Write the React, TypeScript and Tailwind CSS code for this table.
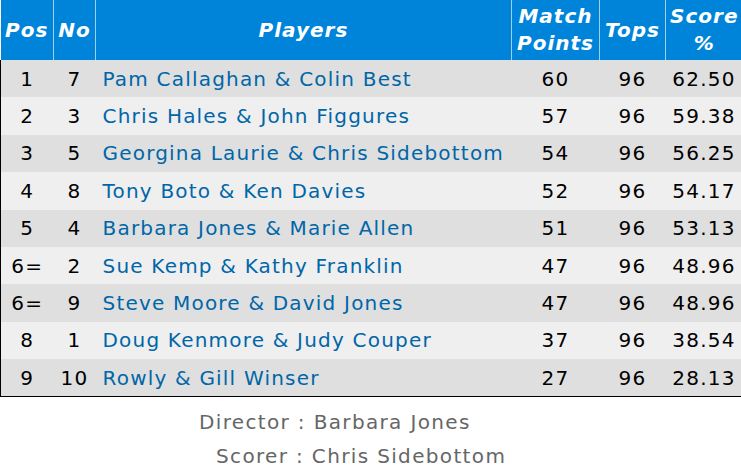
import React from 'react';

type Row = { pos: string; no: string; players: string; mp: string; tops: string; score: string };

const rows: Row[] = [
  { pos: '1', no: '7', players: 'Pam Callaghan & Colin Best', mp: '60', tops: '96', score: '62.50' },
  { pos: '2', no: '3', players: 'Chris Hales & John Figgures', mp: '57', tops: '96', score: '59.38' },
  { pos: '3', no: '5', players: 'Georgina Laurie & Chris Sidebottom', mp: '54', tops: '96', score: '56.25' },
  { pos: '4', no: '8', players: 'Tony Boto & Ken Davies', mp: '52', tops: '96', score: '54.17' },
  { pos: '5', no: '4', players: 'Barbara Jones & Marie Allen', mp: '51', tops: '96', score: '53.13' },
  { pos: '6=', no: '2', players: 'Sue Kemp & Kathy Franklin', mp: '47', tops: '96', score: '48.96' },
  { pos: '6=', no: '9', players: 'Steve Moore & David Jones', mp: '47', tops: '96', score: '48.96' },
  { pos: '8', no: '1', players: 'Doug Kenmore & Judy Couper', mp: '37', tops: '96', score: '38.54' },
  { pos: '9', no: '10', players: 'Rowly & Gill Winser', mp: '27', tops: '96', score: '28.13' },
];

export default function App() {
  return (
    <div className="w-[741px] h-[469px] overflow-hidden bg-white font-['DejaVu_Sans',Verdana,sans-serif] text-[20px] tracking-[1.2px]">
      <table className="w-[742px] border-collapse table-fixed">
        <colgroup>
          <col className="w-[53px]" />
          <col className="w-[42px]" />
          <col className="w-[416px]" />
          <col className="w-[88px]" />
          <col className="w-[66px]" />
          <col className="w-[77px]" />
        </colgroup>
        <thead>
          <tr className="h-[60px] bg-[#0084d9] text-white font-bold italic leading-[27px] tracking-[1px]">
            <th className="border-r border-[#9fd0f0] p-0 text-center">Pos</th>
            <th className="border-r border-[#9fd0f0] p-0 text-center">No</th>
            <th className="border-r border-[#9fd0f0] p-0 text-center">Players</th>
            <th className="border-r border-[#9fd0f0] p-0 text-center">Match<br />Points</th>
            <th className="border-r border-[#9fd0f0] p-0 text-center">Tops</th>
            <th className="p-0 text-center">Score<br />%</th>
          </tr>
        </thead>
        <tbody className="border-l border-b border-black">
          {rows.map((r, i) => (
            <tr key={i} className={`h-[37.4px] ${i % 2 === 0 ? 'bg-[#dfdfdf]' : 'bg-[#efefef]'}`}>
              <td className="text-center text-black p-0">{r.pos}</td>
              <td className="text-center text-black p-0">{r.no}</td>
              <td className="text-left text-[#0066a8] pl-[7px] p-0 whitespace-nowrap">{r.players}</td>
              <td className="text-center text-black p-0">{r.mp}</td>
              <td className="text-center text-black p-0">{r.tops}</td>
              <td className="text-center text-black p-0">{r.score}</td>
            </tr>
          ))}
        </tbody>
      </table>
      <div className="flex flex-col text-[#666666] leading-[34px] pt-[8px] tracking-[1.35px]">
        <div className="pl-[199px]">Director : Barbara Jones</div>
        <div className="pl-[216px]">Scorer : Chris Sidebottom</div>
      </div>
    </div>
  );
}
